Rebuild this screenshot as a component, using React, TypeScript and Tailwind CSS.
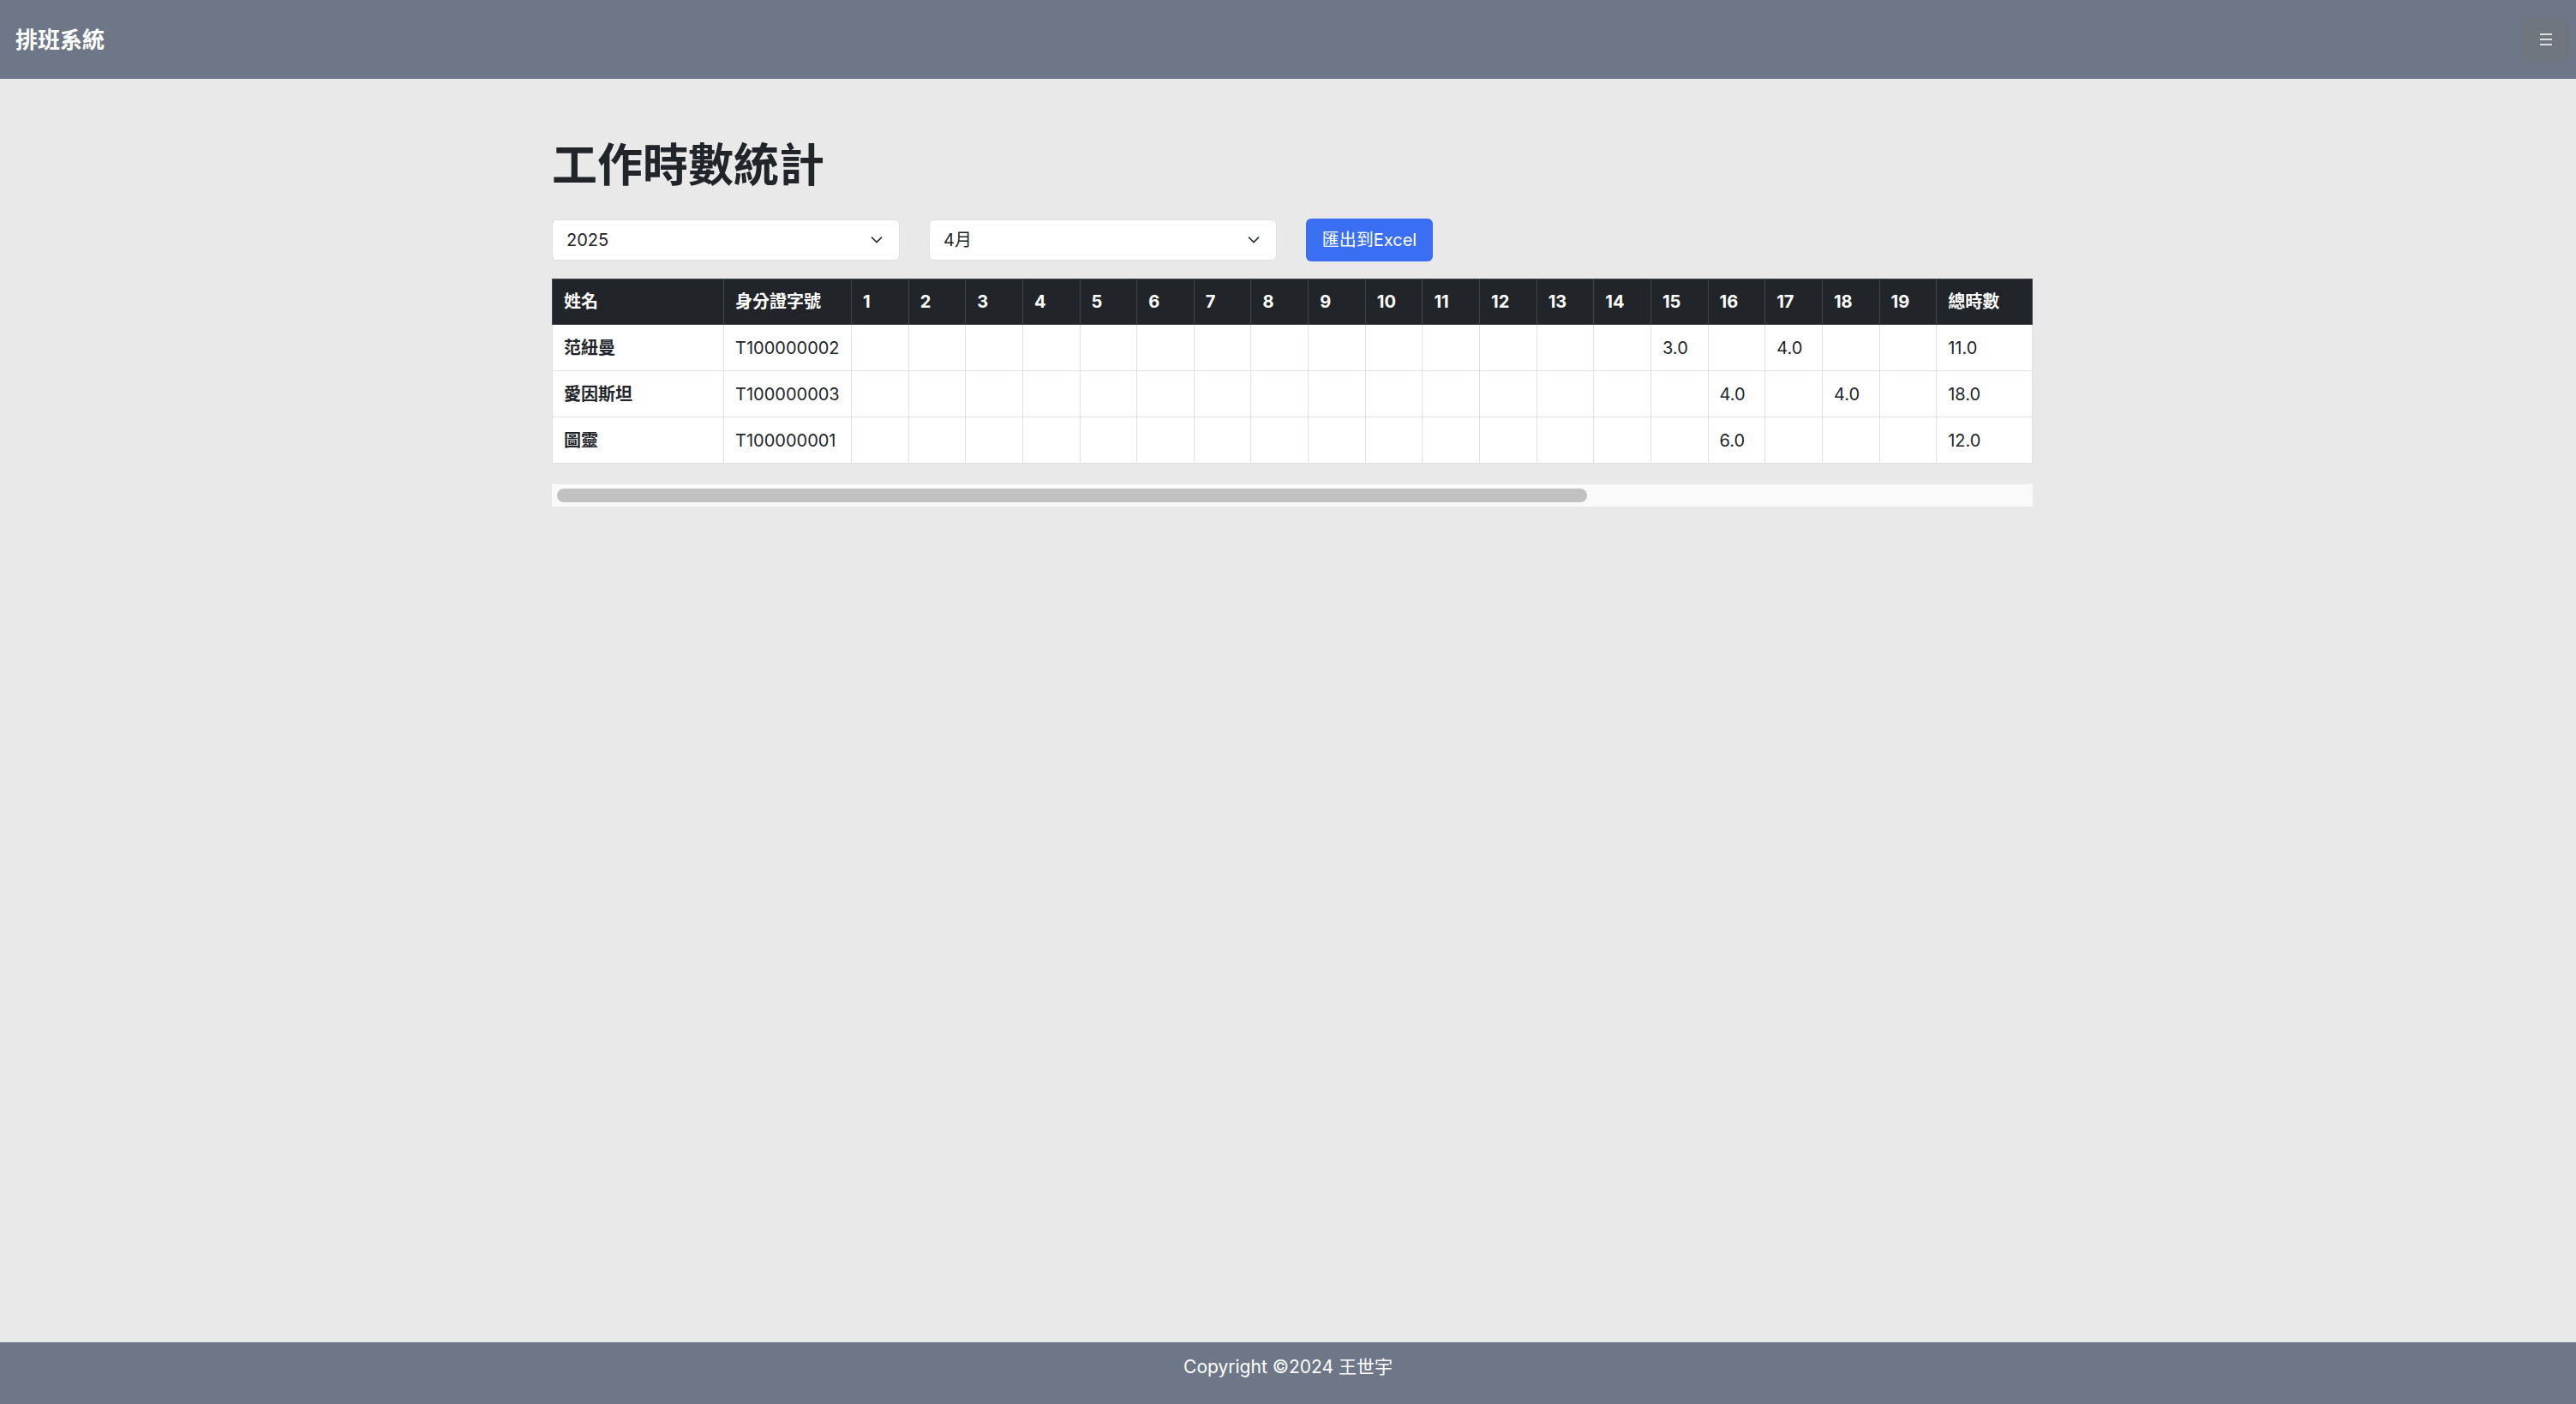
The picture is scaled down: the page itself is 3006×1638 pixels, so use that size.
import React from 'react';

// Monthly work-hour summary: a grey top bar, the year/month pickers with an export button,
// a day-by-day table with its sideways scroll bar, and a footer.

type Row = { name: string; id: string; hours: Record<number, number>; total: number };

const DAYS = Array.from({ length: 19 }, (_, i) => i + 1);

const ROWS: Row[] = [
  { name: '范紐曼', id: 'T100000002', hours: { 15: 3, 17: 4 }, total: 11 },
  { name: '愛因斯坦', id: 'T100000003', hours: { 16: 4, 18: 4 }, total: 18 },
  { name: '圖靈', id: 'T100000001', hours: { 16: 6 }, total: 12 },
];

const Chevron = (): JSX.Element => (
  <svg
    viewBox="0 0 14 8"
    className="pointer-events-none absolute right-[20px] top-1/2 h-[8px] w-[14px] -translate-y-1/2"
    fill="none"
    stroke="#343a40"
    strokeWidth="1.8"
    strokeLinecap="round"
    strokeLinejoin="round"
  >
    <polyline points="1.5,1.2 7,6.6 12.5,1.2" />
  </svg>
);

const Picker = ({ value, options }: { value: string; options: string[] }): JSX.Element => (
  <div className="relative w-[406px]">
    <select
      defaultValue={value}
      className="h-[48px] w-full appearance-none rounded-[6px] border border-[#dee2e6] bg-white pl-[16px] text-[20px] text-[#212529] outline-none"
    >
      {options.map((o) => (
        <option key={o}>{o}</option>
      ))}
    </select>
    <Chevron />
  </div>
);

const headCell = 'h-[54px] border-b border-r border-[#41464b] bg-[#212529] px-[13px] text-left text-[20px] font-bold text-white';
const bodyCell = 'h-[54px] border-b border-r border-[#dee2e6] bg-white px-[13px] text-left text-[20px] text-[#212529]';

const HoursTable = (): JSX.Element => (
  <div className="mt-[20px]">
    <table className="w-full table-fixed border-separate border-spacing-0">
      <colgroup>
        <col className="w-[201px]" />
        <col className="w-[149px]" />
        {DAYS.map((d) => (
          <col key={d} className="w-[66.65px]" />
        ))}
        <col className="w-[112px]" />
      </colgroup>
      <thead>
        <tr>
          <th className={`${headCell} border-l border-t`}>姓名</th>
          <th className={`${headCell} border-t`}>身分證字號</th>
          {DAYS.map((d) => (
            <th key={d} className={`${headCell} border-t`}>
              {d}
            </th>
          ))}
          <th className={`${headCell} border-t`}>總時數</th>
        </tr>
      </thead>
      <tbody>
        {ROWS.map((row) => (
          <tr key={row.id}>
            <th className={`${bodyCell} border-l font-bold`}>{row.name}</th>
            <td className={bodyCell}>{row.id}</td>
            {DAYS.map((d) => (
              <td key={d} className={bodyCell}>
                {row.hours[d] !== undefined ? row.hours[d].toFixed(1) : ''}
              </td>
            ))}
            <td className={bodyCell}>{row.total.toFixed(1)}</td>
          </tr>
        ))}
      </tbody>
    </table>
    {/* horizontal scroll bar of the table wrapper */}
    <div className="mt-[24px] flex h-[26px] items-center bg-[#fafafa] px-[6px]">
      <div className="h-[16px] w-[1202px] rounded-full bg-[#c1c1c1]" />
    </div>
  </div>
);

export default function App(): JSX.Element {
  return (
    <div className="flex min-h-screen flex-col bg-[#e9e9e9] font-[Inter,'Noto_Sans_CJK_TC',sans-serif]">
      <header className="flex h-[92px] shrink-0 items-center justify-between bg-[#6d7787] pl-[18px] pr-[8px]">
        <span className="text-[26px] font-bold text-white">排班系統</span>
        <button
          type="button"
          aria-label="menu"
          className="flex h-[51px] w-[55px] flex-col items-center justify-center gap-[4px] rounded-[7px] border border-[#6c7682] bg-[#6f767e]"
        >
          <span className="h-[2px] w-[14px] bg-[#dedede]" />
          <span className="h-[2px] w-[14px] bg-[#dedede]" />
          <span className="h-[2px] w-[14px] bg-[#dedede]" />
        </button>
      </header>

      <main className="flex-1 pt-[70px]">
        <div className="mx-auto w-[1738px] pl-[10px]">
          <h1 className="text-[53px] font-bold leading-[62px] text-[#212529]">工作時數統計</h1>
          <div className="mt-[31px] flex items-center gap-[34px]">
            <Picker value="2025" options={['2024', '2025', '2026']} />
            <Picker value="4月" options={Array.from({ length: 12 }, (_, i) => `${i + 1}月`)} />
            <button
              type="button"
              className="h-[50px] w-[148px] rounded-[6px] bg-[#3a6ff3] text-[20px] text-white"
            >
              匯出到Excel
            </button>
          </div>
          <HoursTable />
        </div>
      </main>

      <footer className="h-[72px] shrink-0 bg-[#6d7787] pt-[14px] text-center text-[21px] leading-[30px] text-white">
        Copyright ©2024 王世宇
      </footer>
    </div>
  );
}
